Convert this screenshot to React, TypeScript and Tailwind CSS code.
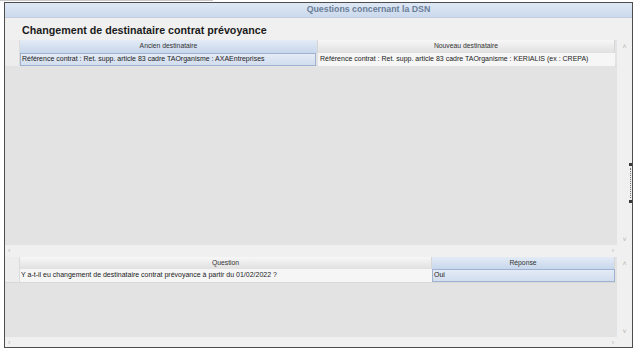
import React from "react";

const font = { fontFamily: '"Liberation Sans", Arial, sans-serif' };

function ColHeader({ label, blue }: { label: string; blue?: boolean }) {
  return (
    <div
      className={
        "flex h-full items-center justify-center border-r border-[#d6d6d6] text-[6.8px] text-[#333] " +
        (blue
          ? "bg-gradient-to-b from-[#e3ebf6] to-[#c8d7ec]"
          : "bg-gradient-to-b from-[#f7f7f7] to-[#e0e0e0]")
      }
    >
      {label}
    </div>
  );
}

function VScroll() {
  return (
    <div className="flex w-[15px] shrink-0 flex-col items-center justify-between bg-[#f0f0f0] pb-[2px] pt-[3px] text-[7px] leading-none text-[#b5b5b5]">
      <span>˄</span>
      <span>˅</span>
    </div>
  );
}

function HScroll() {
  return (
    <div className="flex h-[10px] shrink-0 items-center justify-between bg-[#f0f0f0] pl-[3px] pr-[18px] text-[7px] leading-none text-[#b5b5b5]">
      <span>‹</span>
      <span>›</span>
    </div>
  );
}

export default function App() {
  return (
    <div className="relative h-[356px] w-[641px] overflow-hidden bg-white" style={font}>
      <div className="h-[1px] w-[213px] bg-[#c8c8c8]" />
      <div className="ml-[4px] mt-[1px] flex h-[346px] w-[629px] flex-col border border-[#4d4d4d] bg-[#f0f0f0]">
        <div className="flex h-[15px] shrink-0 items-center justify-center border-b border-[#c3cedc] bg-gradient-to-b from-[#dfe8f4] to-[#cbd9ec] pl-[100px] text-[8.8px] font-bold text-[#6a7e98]">
          Questions concernant la DSN
        </div>
        <div className="flex h-[22px] shrink-0 items-center pl-[17px] pt-[3px] text-[10.7px] font-bold text-[#1b1b1b]">
          Changement de destinataire contrat prévoyance
        </div>

        <div className="flex h-[215px] shrink-0 flex-col">
          <div className="flex min-h-0 flex-1">
            <div className="flex min-w-0 flex-1 flex-col bg-[#e3e3e3]">
              <div className="grid h-[13px] shrink-0 grid-cols-[15px_298px_297px]">
                <div className="border-r border-[#dcdcdc] bg-[#ededed]" />
                <ColHeader label="Ancien destinataire" blue />
                <ColHeader label="Nouveau destinataire" />
              </div>
              <div className="grid h-[13px] shrink-0 grid-cols-[15px_298px_297px] border-b border-[#d8d8d8] text-[7px] text-[#222]">
                <div className="border-r border-[#dcdcdc] bg-[#ededed]" />
                <div className="mr-[2px] flex items-center border border-[#9fb2cf] bg-gradient-to-b from-[#e4ebf6] to-[#d2ddee] pl-[1px]">
                  Référence contrat : Ret. supp. article 83 cadre TAOrganisme : AXAEntreprises
                </div>
                <div className="flex items-center bg-[#f6f6f6] pl-[2px]">
                  Référence contrat : Ret. supp. article 83 cadre TAOrganisme : KERIALIS (ex : CREPA)
                </div>
              </div>
              <div className="flex-1" />
            </div>
            <VScroll />
          </div>
          <HScroll />
        </div>

        <div className="mt-[2px] flex min-h-0 flex-1 flex-col">
          <div className="flex min-h-0 flex-1">
            <div className="flex min-w-0 flex-1 flex-col bg-[#e3e3e3]">
              <div className="grid h-[12px] shrink-0 grid-cols-[15px_412px_183px]">
                <div className="border-r border-[#dcdcdc] bg-[#ededed]" />
                <ColHeader label="Question" />
                <ColHeader label="Réponse" blue />
              </div>
              <div className="grid h-[14px] shrink-0 grid-cols-[15px_412px_183px] border-b border-[#d8d8d8] text-[7px] text-[#222]">
                <div className="border-r border-[#dcdcdc] bg-[#ededed]" />
                <div className="flex items-center bg-[#f6f6f6] pl-[1px]">
                  Y a-t-il eu changement de destinataire contrat prévoyance à partir du 01/02/2022 ?
                </div>
                <div className="flex items-center border border-[#9fb2cf] bg-gradient-to-b from-[#e4ebf6] to-[#d2ddee] pl-[1px]">
                  Oui
                </div>
              </div>
              <div className="flex-1" />
            </div>
            <VScroll />
          </div>
          <HScroll />
        </div>
      </div>
      <div className="absolute left-[629px] top-[163px] flex h-[40px] w-[3px] flex-col items-center justify-between">
        <div className="h-[3px] w-[3px] bg-[#3a3a3a]" />
        <div className="h-[30px] w-[1px] border-l border-dotted border-[#7a7a7a]" />
        <div className="h-[3px] w-[3px] bg-[#3a3a3a]" />
      </div>
    </div>
  );
}
